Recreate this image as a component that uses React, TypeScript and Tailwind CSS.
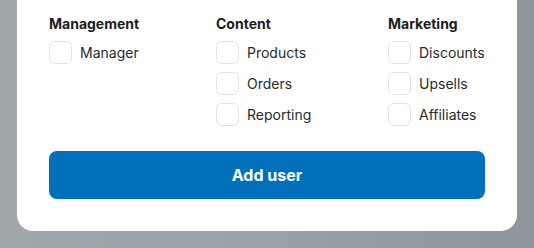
import React from "react";

const groups = [
  { title: "Management", items: ["Manager"] },
  { title: "Content", items: ["Products", "Orders", "Reporting"] },
  { title: "Marketing", items: ["Discounts", "Upsells", "Affiliates"] },
];

export default function App() {
  return (
    <div
      className="w-[534px] h-[248px] overflow-hidden bg-gradient-to-r from-[#a1a8ac] via-[#99a1a6] to-[#8d969c]"
      style={{ fontFamily: "Inter, 'Noto Sans', sans-serif" }}
    >
      <div className="ml-[17px] w-[500px] bg-white rounded-b-2xl px-8 pt-[14px] pb-8">
        {/* Permission groups */}
        <div className="grid grid-cols-[167px_172px_1fr]">
          {groups.map((group) => (
            <div key={group.title}>
              <h4 className="text-[14px] leading-5 font-bold text-[#1c1c1c] mb-[7px]">{group.title}</h4>
              <div className="flex flex-col gap-2">
                {group.items.map((item) => (
                  <label key={item} className="flex items-center gap-2 h-[23px]">
                    <span className="w-[23px] h-[23px] rounded-md border border-[#e2e2e2] bg-white" />
                    <span className="text-[14px] text-[#2a2a2a]">{item}</span>
                  </label>
                ))}
              </div>
            </div>
          ))}
        </div>

        <button className="mt-[25px] w-full h-12 rounded-lg bg-[#0070ba] text-white text-[16px] font-bold">
          Add user
        </button>
      </div>
    </div>
  );
}
